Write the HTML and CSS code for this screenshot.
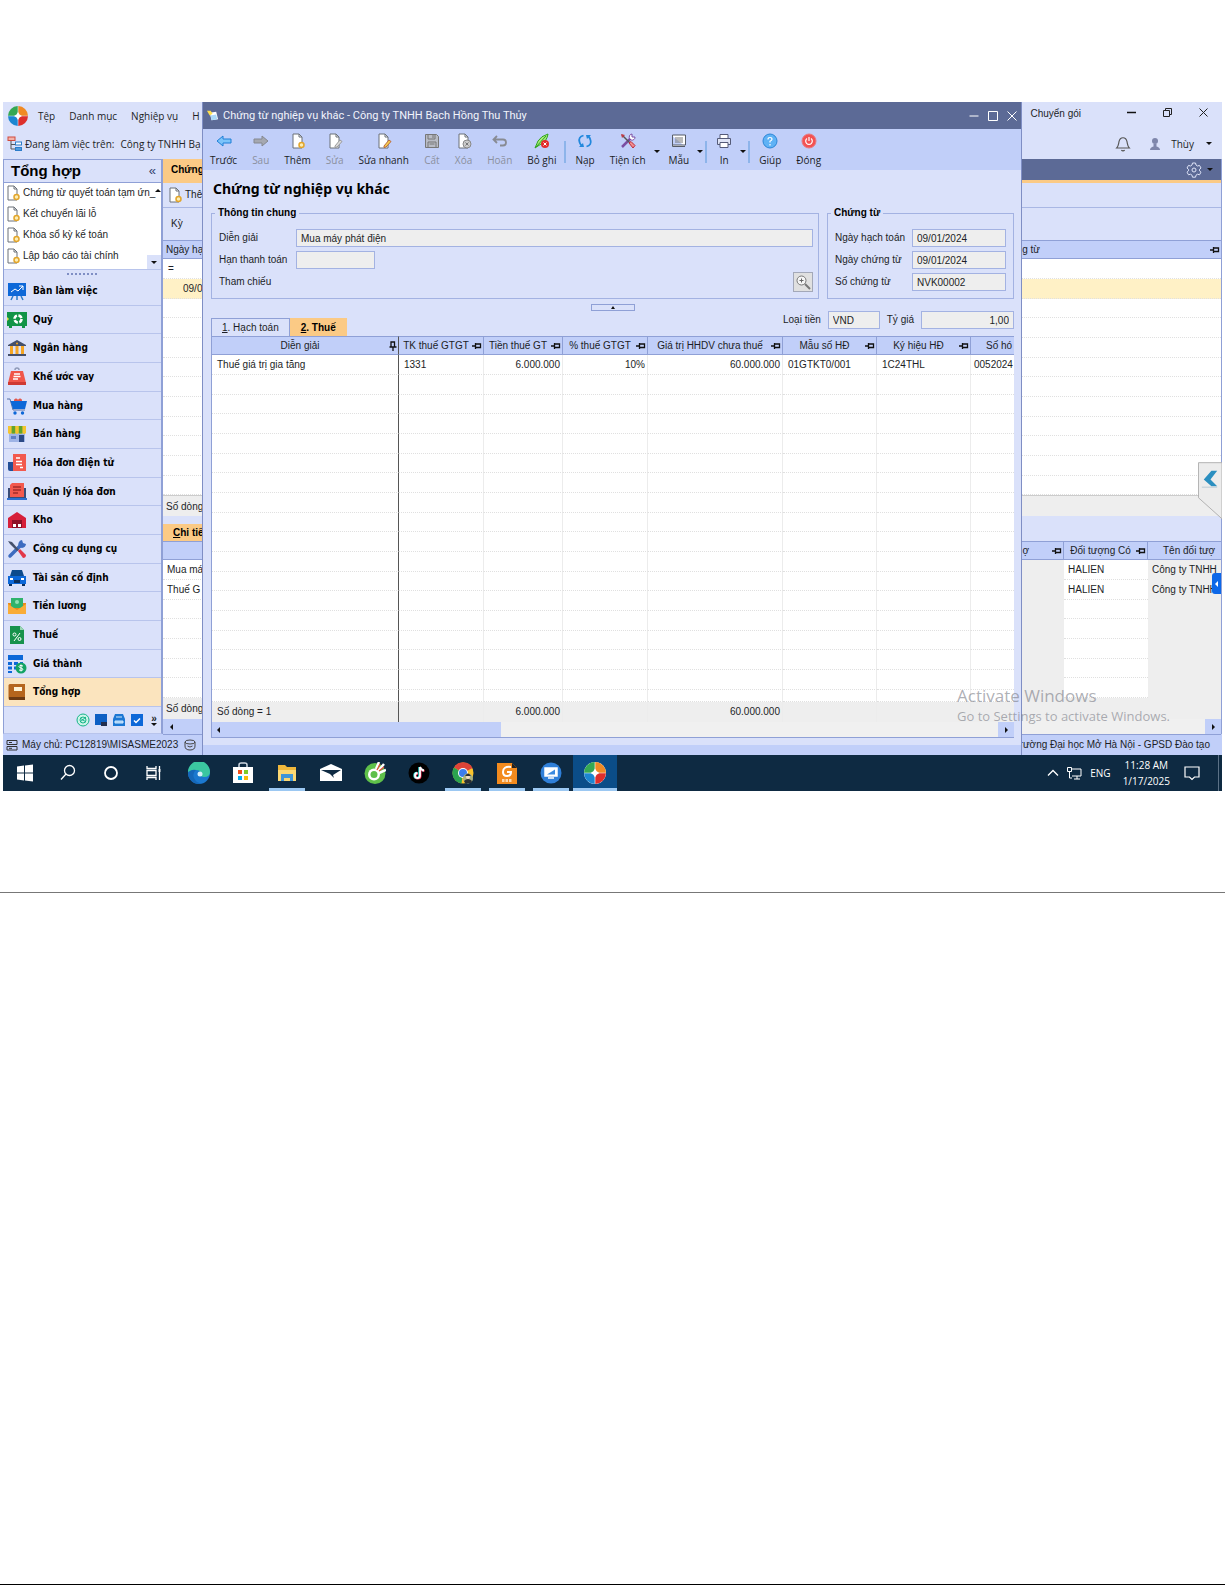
FILE: index.html
```html
<!DOCTYPE html>
<html lang="vi">
<head>
    <meta charset="UTF-8">
    <meta name="viewport" content="width=device-width, initial-scale=1.0">
    <title>Chứng từ nghiệp vụ khác</title>
    <link rel="stylesheet" href="styles.css">
</head>
<body>
    <!-- shared icons -->
    <svg class="defs" aria-hidden="true">
        <symbol id="pin" viewBox="0 0 10 8"><path d="M0 4h3M3.500 1v6M3.500 2h5v3.500h-5M3.500 5.500h5" fill="none" stroke="#111" stroke-width="1.300"/></symbol>
        <symbol id="pin-down" viewBox="0 0 8 10"><path d="M4 6v4M.5 6h7M2 6V1h3.500v5M5.500 1v5" fill="none" stroke="#111" stroke-width="1.300"/></symbol>
        <symbol id="doc" viewBox="0 0 16 16"><path d="M3 1h6l3 3v11H3z" fill="#fff" stroke="#6b7078"/><path d="M9 1v3h3" fill="none" stroke="#6b7078"/></symbol>
        <symbol id="newdoc" viewBox="0 0 16 16"><use href="#doc"/><circle cx="11.500" cy="12" r="2.500" fill="#fdeeb5" stroke="#e2a52b" stroke-width="1.500"/></symbol>
        <symbol id="misa" viewBox="0 0 20 20"><path d="M9.700 9.700V0A10 10 0 0 0 0 9.700z" fill="#35a853"/><path d="M10.300 9.700V0A10 10 0 0 1 20 9.700z" fill="#f08a24"/><path d="M9.700 10.300V20A10 10 0 0 1 0 10.300z" fill="#1c86d1"/><path d="M10.300 10.300V20A10 10 0 0 0 20 10.300z" fill="#dd2f2c"/><path d="M10 6l1.500 2.500L14 10l-2.500 1.500L10 14l-1.500-2.500L6 10l2.500-1.500z" fill="#fff"/></symbol>
    </svg>

    <section class="page">
        <div class="screen">
            <div class="app">
                <header class="menubar">
                    <svg class="logo"><use href="#misa"/></svg>
                    <nav class="menu">
                        <a href="#">Tệp</a>
                        <a href="#">Danh mục</a>
                        <a href="#">Nghiệp vụ</a>
                        <a href="#">H</a>
                    </nav>
                    <a class="upgrade" href="#">Chuyển gói</a>
                    <div class="window-buttons">
                        <button aria-label="Thu nhỏ"><svg viewBox="0 0 12 12"><path d="M1 5.500h9" stroke="#111" stroke-width="1.500"/></svg></button>
                        <button aria-label="Khôi phục"><svg viewBox="0 0 12 12"><path d="M1.500 3.500h6v6h-6zM3.500 3.500v-2h6v6h-2" fill="none" stroke="#222"/></svg></button>
                        <button aria-label="Đóng"><svg viewBox="0 0 12 12"><path d="M1.500 1.500l8 8M9.500 1.500l-8 8" stroke="#222"/></svg></button>
                    </div>
                </header>
                <div class="workbar">
                    <svg class="tree" viewBox="0 0 16 16"><path d="M4 5v8h5M4 8.500h5" fill="none" stroke="#555"/><rect x="1" y="1" width="7" height="3.500" fill="#f2b3ab" stroke="#cf4a3c"/><rect x="8.500" y="6" width="6" height="3" fill="#fff" stroke="#2b7cc9"/><rect x="8.500" y="11.500" width="6" height="3" fill="#4f9de0" stroke="#2b7cc9"/></svg>
                    <span>Đang làm việc trên:</span>
                    <span class="company">Công ty TNHH Bạ</span>
                    <svg class="bell" viewBox="0 0 14 14"><path d="M1.500 10.500c1.500-1.500 1.500-3 2-5.500C4 2.500 5.500 1.500 7 1.500S10 2.500 10.500 5c.5 2.500.5 4 2 5.500zM5.500 12.500q1.500 1 3 0" fill="none" stroke="#555"/></svg>
                    <svg class="user" viewBox="0 0 14 14"><circle cx="7" cy="4" r="3" fill="#7e86ab"/><path d="M2 13q0-2.500 3.500-3.500V7h3v2.500q3.500 1 3.500 3.500z" fill="#7e86ab"/></svg>
                    <span>Thùy</span>
                    <i class="caret user-caret"></i>
                </div>

                <div class="workspace">
                    <aside class="sidebar">
                        <div class="side-title"><h2>Tổng hợp</h2><span>«</span></div>
                        <div class="submenu">
                            <ul>
                                <li><svg><use href="#newdoc"/></svg>Chứng từ quyết toán tạm ứn_</li>
                                <li><svg><use href="#newdoc"/></svg>Kết chuyển lãi lỗ</li>
                                <li><svg><use href="#newdoc"/></svg>Khóa sổ kỳ kế toán</li>
                                <li><svg><use href="#newdoc"/></svg>Lập báo cáo tài chính</li>
                            </ul>
                            <div class="side-scroll"><button aria-label="Lên"><i class="tri-up"></i></button><button aria-label="Xuống"><i class="caret"></i></button></div>
                        </div>
                        <div class="splitter"></div>
                        <nav class="modules">
                            <a href="#"><svg viewBox="0 0 20 20"><path d="M6 15l-2 4M14 15l2 4M10 15v4" stroke="#2b7cc9" stroke-width="1.500"/><rect x="1" y="2" width="18" height="13" fill="#0d68d8"/><path d="M4 11l4-3 3 2 5-5M12 5h4v4" fill="none" stroke="#fff"/></svg>Bàn làm việc</a>
                            <a href="#"><svg viewBox="0 0 20 20"><path d="M0 2h20v14h-2v2h-3v-2H5v2H2v-2H0z" fill="#119447"/><circle cx="11" cy="9" r="3.500" fill="none" stroke="#fff" stroke-width="2.500" stroke-dasharray="4 1.500"/><path d="M0 7l2 2-2 2z" fill="#e6e04c"/></svg>Quỹ</a>
                            <a href="#"><svg viewBox="0 0 20 20"><path d="M1 7l9-5 9 5v1H1z" fill="#44506b"/><path d="M3 8h3v8H3zM8.500 8h3v8h-3zM14 8h3v8h-3z" fill="#f5a623"/><path d="M1 16h18v2H1z" fill="#44506b"/><circle cx="10" cy="5.500" r="1" fill="#f5a623"/></svg>Ngân hàng</a>
                            <a href="#"><svg viewBox="0 0 20 20"><path d="M8 3a2 2 0 0 1 4 0" fill="none" stroke="#8f9ab8" stroke-width="1.500"/><path d="M4 4h12l3 12v2H1v-2z" fill="#f0564a"/><path d="M1 15h18v3H1z" fill="#cf3a33"/><path d="M7 7h6M6.500 9.500h7M6 12h5" stroke="#fff" stroke-width="1.300"/></svg>Khế ước vay</a>
                            <a href="#"><svg viewBox="0 0 20 20"><path d="M7 5a2 2 0 0 1 4-1 2 2 0 0 1 4 1z" fill="#e2574c"/><path d="M0 3h3l3 11h12" fill="none" stroke="#5873a8"/><path d="M3.500 5H20l-2 8H6z" fill="#0d68d8"/><circle cx="8" cy="17" r="1.700" fill="#0d68d8"/><circle cx="15.500" cy="17" r="1.700" fill="#0d68d8"/></svg>Mua hàng</a>
                            <a href="#"><svg viewBox="0 0 20 20"><path d="M2 8h16v10H2z" fill="#9fb4e6"/><path d="M12 11h5v7h-5z" fill="#2c4a86"/><path d="M4 12h5v3H4z" fill="#5f7fc4"/><path d="M1 2h18v7q-2 2-3.600 0-2 2-3.600 0-2 2-3.600 0-2 2-3.600 0-2 2-3.600 0z" fill="#f4c430"/><path d="M4.600 2h3.600v7.500H4.600zM11.800 2h3.600v7.500h-3.600z" fill="#5fa32f"/></svg>Bán hàng</a>
                            <a href="#"><svg viewBox="0 0 20 20"><path d="M6 1h13v17H6z" fill="#f2594e"/><path d="M1 9h5v9H3q-2 0-2-2z" fill="#234f96"/><path d="M9 5h4M9 8.500h6M9 11.500h6M13 14.500h3" stroke="#fff" stroke-width="1.300"/></svg>Hóa đơn điện tử</a>
                            <a href="#"><svg viewBox="0 0 20 20"><path d="M1 6h18v10H1z" fill="#3a4c77"/><path d="M5 1h12v14H3V3z" fill="#f2594e"/><path d="M6 5h8M6 8h8M6 11h5" stroke="#a32d2b" stroke-width="1.300"/><path d="M0 16h20v2H0z" fill="#2d6fd0"/></svg>Quản lý hóa đơn</a>
                            <a href="#"><svg viewBox="0 0 20 20"><path d="M1 8l9-6 9 6v10H1z" fill="#d61f3a"/><path d="M5 10h10v8H5z" fill="#8e1027"/><path d="M6 14h3v3H6zM11 14h3v3h-3z" fill="#fff"/></svg>Kho</a>
                            <a href="#"><svg viewBox="0 0 20 20"><path d="M3 17L14 6" stroke="#3d6cc0" stroke-width="3.500" stroke-linecap="round"/><path d="M12 8a4.500 4.500 0 0 1 3-7l1 3 3 1a4.500 4.500 0 0 1-4 4z" fill="#3d6cc0"/><path d="M1 2l4 1 7 8-2 1-7-7z" fill="#44506b"/><path d="M11 12l2-2 6 6q0 3-3 3z" fill="#e2384a"/></svg>Công cụ dụng cụ</a>
                            <a href="#"><svg viewBox="0 0 20 20"><path d="M5 2h10l2 6H3z" fill="#0c4b8d"/><path d="M1 8h18v8H1z" fill="#0d68d8"/><path d="M2 16h3v2H2zM15 16h3v2h-3z" fill="#0b2f5c"/><path d="M3 10h3v2H3zM14 10h3v2h-3z" fill="#fff"/><path d="M7 12h6v3H7z" fill="#0b2f5c"/></svg>Tài sản cố định</a>
                            <a href="#"><svg viewBox="0 0 20 20"><path d="M1 7h18v11H1z" fill="#e88a1a"/><path d="M4 2h12v10H4z" fill="#2fb36c"/><circle cx="10" cy="6" r="2" fill="#8fe0b4"/><path d="M1 8l9 6 9-6v10H1z" fill="#f9ac37"/></svg>Tiền lương</a>
                            <a href="#"><svg viewBox="0 0 20 20"><path d="M3 1h10l4 4v14H3z" fill="#17924c"/><path d="M13 1v4h4z" fill="#9bd8b5"/><circle cx="7.500" cy="9.500" r="1.500" fill="none" stroke="#fff"/><circle cx="12.500" cy="14" r="1.500" fill="none" stroke="#fff"/><path d="M13 8l-6 8" stroke="#fff"/></svg>Thuế</a>
                            <a href="#"><svg viewBox="0 0 20 20"><path d="M1 1h15v5H1z" fill="#0d68d8"/><path d="M1 8h4v3H1zM7 8h4v3H7zM1 12.500h4v3H1zM1 17h4v2H1zM7 12.500h2v3H7zM13 8h3v2h-3z" fill="#0d68d8"/><circle cx="14" cy="14" r="5.500" fill="#13a364"/><path d="M16 12q-4-1.500-4 .5 0 1 2 1.500t2 1.500q0 1.500-4 .5M14 10.500v7" fill="none" stroke="#fff"/></svg>Giá thành</a>
                            <a class="active" href="#"><svg viewBox="0 0 20 20"><path d="M3 2h15v16H3q-1.500 0-1.500-2V3.500Q1.500 2 3 2z" fill="#b5651d"/><path d="M2 15h16v3H3q-1 0-1-1.500z" fill="#6d3a12"/><path d="M7 5h8v4H7z" fill="#fff3d6"/></svg>Tổng hợp</a>
                        </nav>
                        <div class="side-foot">
                            <svg viewBox="0 0 14 14"><circle cx="7" cy="7" r="6" fill="#cdf5e8" stroke="#16b48a"/><circle cx="7" cy="7" r="3" fill="none" stroke="#16b48a"/><path d="M4 9l6-5M4 5l6 4" stroke="#16b48a"/></svg>
                            <svg viewBox="0 0 14 14"><path d="M1 1h12v11H1z" fill="#0d5fc4"/><path d="M7 9h6v4H7z" fill="#222f4f"/></svg>
                            <svg viewBox="0 0 14 14"><path d="M3 1h8l2 5v7H1V6z" fill="#1c78d4"/><path d="M4 4h6M3 8h8v2H3z" fill="#9fd0fa" stroke="#cfe7fc"/></svg>
                            <svg viewBox="0 0 14 14"><path d="M1 1h12v12H1z" fill="#0d68d8"/><path d="M4 7.500l2 2 4-4" fill="none" stroke="#fff" stroke-width="1.500"/></svg>
                            <span class="more">»<i class="caret"></i></span>
                        </div>
                    </aside>

                    <main class="content">
                        <div class="tabstrip">
                            <button class="tab">Chứng</button>
                            <svg class="gear" viewBox="0 0 16 16"><path d="M6.500 1h3l.5 2 1.500 1 2-.6 1.500 2.600-1.500 1.400v1.400l1.500 1.400-1.500 2.600-2-.6-1.500 1-.5 2h-3L6 13.200l-1.500-1-2 .6L1 10.200l1.500-1.400V7.400L1 6l1.500-2.600 2 .6L6 3z" fill="none" stroke="#dfe4f8"/><circle cx="8" cy="8" r="2" fill="none" stroke="#dfe4f8"/></svg>
                            <i class="caret"></i>
                        </div>
                        <div class="list-tools"><svg><use href="#newdoc"/></svg>Thê</div>
                        <div class="filter">Kỳ</div>
                        <table class="grid list" data-rows="10">
                            <thead><tr><th class="first">Ngày hạ</th><th></th><th class="kind">g từ<svg class="pin"><use href="#pin"/></svg></th></tr></thead>
                            <tbody>
                                <tr><td>=</td><td></td><td></td></tr>
                                <tr class="selected"><td class="date">09/0</td><td></td><td></td></tr>
                            </tbody>
                        </table>
                        <div class="count">Số dòng</div>
                        <div class="detail-tabs"><button class="tab"><u>C</u>hi tiế</button></div>
                        <table class="grid detail" data-rows="5">
                            <colgroup><col class="w-desc"><col><col class="w-obj"><col class="w-name"></colgroup>
                            <thead><tr><th></th><th class="right">ợ<svg class="pin"><use href="#pin"/></svg></th><th>Đối tượng Có<svg class="pin"><use href="#pin"/></svg></th><th class="cut">Tên đối tượ</th></tr></thead>
                            <tbody>
                                <tr><td>Mua má</td><td></td><td>HALIEN</td><td>Công ty TNHH</td></tr>
                                <tr><td>Thuế G</td><td></td><td>HALIEN</td><td>Công ty TNHH</td></tr>
                            </tbody>
                        </table>
                        <div class="count detail-count">Số dòng</div>
                        <div class="hscroll"><button class="sb left" aria-label="Trái"><i class="tri-left"></i></button><span class="thumb"></span><button class="sb" aria-label="Phải"><i class="tri-right"></i></button></div>
                    </main>
                </div>

                <footer class="status">
                    <svg viewBox="0 0 12 12"><path d="M1 1.500h10v4H1zM1 7.500h10v3.500H1zM3 3.500h3M3 9.300h3" fill="none" stroke="#333"/></svg>
                    <span>Máy chủ: PC12819\MISASME2023</span>
                    <svg class="db" viewBox="0 0 12 12"><ellipse cx="6" cy="3" rx="5" ry="2" fill="none" stroke="#444"/><path d="M1 3v4q0 4 5 4t5-4V3M3.500 7q2.500 2 5 0" fill="none" stroke="#444"/></svg>
                    <span class="school">Trường Đại học Mở Hà Nội - GPSD Đào tạo</span>
                </footer>

                <button class="drawer" aria-label="Mở rộng"><svg viewBox="0 0 25 60"><path d="M.5.5H25V59L.5 37z" fill="#ececec" stroke="#b0b0b0"/><path d="M14 9h6l-7 9 7 7h-6L6 18z" fill="#2b8fc0"/><path d="M4 26h16" stroke="#b9c9d3"/></svg></button>
                <button class="flap" aria-label="Trợ lý"><i class="tri-left"></i></button>

                <div class="dialog" role="dialog" aria-labelledby="dialog-title">
                    <div class="dialog-bar">
                        <svg viewBox="0 0 14 14"><path d="M4 4l7-1 2 8-7 1z" fill="#fff"/><path d="M1 2l4 0 2 3-3 2z" fill="#ffe04d"/><path d="M5 7l6-1 1 5-6 1z" fill="#a9d8f8"/></svg>
                        <span id="dialog-title">Chứng từ nghiệp vụ khác - Công ty TNHH Bạch Hồng Thu Thủy</span>
                        <div class="dialog-buttons">
                            <button aria-label="Thu nhỏ"><svg viewBox="0 0 12 12"><path d="M1.500 6h9" stroke="#fff"/></svg></button>
                            <button aria-label="Phóng to"><svg viewBox="0 0 12 12"><path d="M1.500 1.500h9v9h-9z" fill="none" stroke="#fff"/></svg></button>
                            <button aria-label="Đóng"><svg viewBox="0 0 12 12"><path d="M1.500 1.500l9 9M10.500 1.500l-9 9" stroke="#fff"/></svg></button>
                        </div>
                    </div>
                    <div class="toolbar">
                        <button><svg viewBox="0 0 16 16"><path d="M1 8l6-5v3h8v4H7v3z" fill="#7cc4fa" stroke="#1f7fd6"/></svg>Trước</button>
                        <button disabled><svg viewBox="0 0 16 16"><path d="M15 8L9 3v3H1v4h8v3z" fill="#a5a8b0" stroke="#85888f"/></svg>Sau</button>
                        <button><svg><use href="#newdoc"/></svg>Thêm</button>
                        <button disabled><svg viewBox="0 0 16 16"><use href="#doc"/><path d="M8 13l5-6 2 1.500-5 5.500-2 .5z" fill="#ddd" stroke="#999"/></svg>Sửa</button>
                        <button><svg viewBox="0 0 16 16"><use href="#doc"/><path d="M8 13l5-6 2 1.500-5 5.500-2 .5z" fill="#f7cf4d" stroke="#b9663a"/></svg>Sửa nhanh</button>
                        <button disabled><svg viewBox="0 0 16 16"><path d="M1.500 1.500h11l2 2v11h-13z" fill="#b9bcc5" stroke="#777"/><path d="M4 2v4h7V2M4 14V9h8v5M5.500 11h5M9 2v3" fill="none" stroke="#777"/></svg>Cất</button>
                        <button disabled><svg viewBox="0 0 16 16"><use href="#doc"/><circle cx="11" cy="11" r="4" fill="#ccc" stroke="#888"/><path d="M9.500 9.500l3 3M12.500 9.500l-3 3" stroke="#777"/></svg>Xóa</button>
                        <button disabled><svg viewBox="0 0 16 16"><path d="M5 3L1.500 6.500 5 10M2 6.500h9q3 0 3 3t-3 3H8" fill="none" stroke="#888b93" stroke-width="1.800"/></svg>Hoãn</button>
                        <button><svg viewBox="0 0 16 16"><path d="M1 15L4 8q3-5 10-7-1 7-7 10z" fill="#a8ec7a" stroke="#2fa31f"/><path d="M2 14L12 3" stroke="#2fa31f"/><circle cx="11" cy="11" r="4" fill="#e32b2b"/><path d="M9.500 9.500l3 3M12.500 9.500l-3 3" stroke="#fff"/></svg>Bỏ ghi</button>
                        <span class="sep"></span>
                        <button><svg viewBox="0 0 16 16"><path d="M6.500 2.500Q1 4 2.500 9q.5 2 2 3.500M9.500 13.500q5.500-1.500 4-6.500-.5-2-2-3.500" fill="none" stroke="#2288dd" stroke-width="1.800"/><path d="M2 14l5 0-1-4zM14 2L9 2l1 4z" fill="#2288dd"/></svg>Nạp</button>
                        <button><svg viewBox="0 0 16 16"><path d="M2 14L11 5" stroke="#7b4ea3" stroke-width="2.500"/><path d="M10 6a3 3 0 0 1 2-5v3h3a3 3 0 0 1-4 3z" fill="#fff" stroke="#7b4ea3"/><path d="M2 2l8 8" stroke="#555" stroke-width="1.500"/><path d="M1 1l4 1-3 3z" fill="#c03b45"/><path d="M9 10l2-1.500 4 4-2 2.500z" fill="#f08e8e" stroke="#c02a3a"/></svg>Tiện ích</button>
                        <i class="caret"></i>
                        <button><svg viewBox="0 0 16 16"><path d="M1.500 3v10.500H14M1.500 2h13v10h-13z" fill="#fff" stroke="#555b66"/><path d="M4 5h8M4 7h8M4 9h8" stroke="#777"/></svg>Mẫu</button>
                        <i class="caret"></i>
                        <span class="sep"></span>
                        <button><svg viewBox="0 0 16 16"><path d="M4 5V1.500h8V5" fill="#fff" stroke="#555b78"/><path d="M1.500 5.500h13v6h-13z" fill="#dfe4f5" stroke="#555b78"/><path d="M4 9.500h8v5H4z" fill="#fff" stroke="#555b78"/></svg>In</button>
                        <i class="caret"></i>
                        <span class="sep"></span>
                        <button><svg viewBox="0 0 16 16"><circle cx="8" cy="8" r="7" fill="#5fb2f5" stroke="#2c86d6"/><path d="M6 6.500q0-2 2-2t2 1.700q0 1-2 2v1.300M8 11v1.500" fill="none" stroke="#fff" stroke-width="1.200"/></svg>Giúp</button>
                        <button><svg viewBox="0 0 16 16"><circle cx="8" cy="8" r="7" fill="#f35252" stroke="#e87a80"/><path d="M6 5.500a3.300 3.300 0 1 0 4 0M8 4v4" fill="none" stroke="#fff" stroke-width="1.200"/></svg>Đóng</button>
                    </div>

                    <form class="voucher">
                        <h1>Chứng từ nghiệp vụ khác</h1>
                        <div class="groups">
                            <fieldset class="general">
                                <legend>Thông tin chung</legend>
                                <div class="field"><label for="desc">Diễn giải</label><input id="desc" value="Mua máy phát điện" readonly></div>
                                <div class="field"><label for="due">Hạn thanh toán</label><input id="due" class="short" readonly></div>
                                <div class="field"><label for="ref">Tham chiếu</label><button type="button" id="ref" class="lookup" aria-label="Tham chiếu"><svg viewBox="0 0 16 16"><circle cx="6.500" cy="6.500" r="4.500" fill="#f5f5f5" stroke="#777"/><path d="M10 10l5 5" stroke="#777" stroke-width="2"/><path d="M4.500 6.500h4M6.500 4.500v4" stroke="#666"/></svg></button></div>
                            </fieldset>
                            <fieldset class="doc-info">
                                <legend>Chứng từ</legend>
                                <div class="field"><label for="posted">Ngày hạch toán</label><input id="posted" value="09/01/2024" readonly></div>
                                <div class="field"><label for="dated">Ngày chứng từ</label><input id="dated" value="09/01/2024" readonly></div>
                                <div class="field"><label for="number">Số chứng từ</label><input id="number" value="NVK00002" readonly></div>
                            </fieldset>
                        </div>
                        <button type="button" class="collapse" aria-label="Thu gọn"><i class="tri-up"></i></button>
                        <div class="grid-head">
                            <div class="tabs"><button type="button"><u>1</u>. Hạch toán</button><button type="button" class="on"><u>2</u>. Thuế</button></div>
                            <div class="currency">
                                <label for="cur">Loại tiền</label><input id="cur" class="cur" value="VND" readonly>
                                <label for="rate">Tỷ giá</label><input id="rate" class="rate" value="1,00" readonly>
                            </div>
                        </div>
                        <div class="grid-box">
                            <table class="grid tax" data-rows="17">
                                <colgroup><col><col class="c1"><col class="c2"><col class="c1"><col class="c3"><col class="c4"><col class="c4"><col class="c5"></colgroup>
                                <thead>
                                    <tr>
                                        <th>Diễn giải<svg class="pin down"><use href="#pin-down"/></svg></th>
                                        <th>TK thuế GTGT<svg class="pin"><use href="#pin"/></svg></th>
                                        <th>Tiền thuế GT<svg class="pin"><use href="#pin"/></svg></th>
                                        <th>% thuế GTGT<svg class="pin"><use href="#pin"/></svg></th>
                                        <th>Giá trị HHDV chưa thuế<svg class="pin"><use href="#pin"/></svg></th>
                                        <th>Mẫu số HĐ<svg class="pin"><use href="#pin"/></svg></th>
                                        <th>Ký hiệu HĐ<svg class="pin"><use href="#pin"/></svg></th>
                                        <th class="cut">Số hó</th>
                                    </tr>
                                </thead>
                                <tbody>
                                    <tr><td>Thuế giá trị gia tăng</td><td>1331</td><td class="num">6.000.000</td><td class="num">10%</td><td class="num">60.000.000</td><td>01GTKT0/001</td><td>1C24THL</td><td>0052024</td></tr>
                                </tbody>
                                <tfoot>
                                    <tr><td>Số dòng = 1</td><td></td><td class="num">6.000.000</td><td></td><td class="num">60.000.000</td><td></td><td></td><td></td></tr>
                                </tfoot>
                            </table>
                            <div class="hscroll"><span class="thumb"><i class="tri-left"></i></span><button type="button" class="sb" aria-label="Phải"><i class="tri-right"></i></button></div>
                        </div>
                    </form>
                </div>

                <div class="watermark"><strong>Activate Windows</strong><span>Go to Settings to activate Windows.</span></div>
            </div>

            <div class="taskbar">
                <div class="system">
                    <button aria-label="Start"><svg viewBox="0 0 20 20"><path d="M2 3.500l7-1V9.500H2zM10 2.500l8-1v8h-8zM2 10.500h7v7l-7-1zM10 10.500h8v8l-8-1z" fill="#fff"/></svg></button>
                    <button aria-label="Search"><svg viewBox="0 0 20 20"><circle cx="11.500" cy="7.500" r="5" fill="none" stroke="#fff" stroke-width="1.300"/><path d="M8 11l-5 5.500" stroke="#fff" stroke-width="1.300"/></svg></button>
                    <button aria-label="Cortana"><svg viewBox="0 0 20 20"><circle cx="10" cy="10" r="6" fill="none" stroke="#fff" stroke-width="1.800"/></svg></button>
                    <button aria-label="Task View"><svg viewBox="0 0 20 20"><path d="M3 3v2.500h9V3M3 17v-2.500h9V17M3 7.500h9v5H3zM15.500 3v3M15.500 9v8" fill="none" stroke="#fff" stroke-width="1.300"/><path d="M14.500 6h2v3h-2z" fill="#fff"/></svg></button>
                </div>
                <div class="programs">
                    <button aria-label="Edge"><svg viewBox="0 0 22 22"><circle cx="11" cy="11" r="11" fill="#1b78cf"/><path d="M0 10a11 11 0 0 1 22 0q0 5-6 5-4 0-3-3 0-4-5-4-5 0-8 2z" fill="#3bc7a0"/><path d="M0 11q3-4 8-3-4 3-2 8 2 5 8 5.500A11 11 0 0 1 0 11z" fill="#1567b8"/><circle cx="12" cy="12" r="2.500" fill="#d6effb"/></svg></button>
                    <button aria-label="Store"><svg viewBox="0 0 22 22"><path d="M7 6V3q0-2 2-2h4q2 0 2 2v3" fill="none" stroke="#cfd8e2" stroke-width="1.500"/><path d="M1 5h20v16H1z" fill="#fff"/><path d="M6 8h4v4H6z" fill="#f1511b"/><path d="M12 8h4v4h-4z" fill="#80cc28"/><path d="M6 14h4v4H6z" fill="#00adef"/><path d="M12 14h4v4h-4z" fill="#fbbc09"/></svg></button>
                    <button class="open" aria-label="Explorer"><svg viewBox="0 0 22 22"><path d="M2 3h7l2 2h9v14H2z" fill="#f0b83c"/><path d="M2 8h18v11H2z" fill="#fbd873"/><path d="M5 12h12v7h-3v-3H8v3H5z" fill="#3f95d8"/></svg></button>
                    <button aria-label="Mail"><svg viewBox="0 0 22 22"><path d="M0 7l11-5 11 5v12H0z" fill="#fff"/><path d="M1 8h20l-8 5 1 3-4-4z" fill="#0e2a42"/></svg></button>
                    <button aria-label="Cốc Cốc"><svg viewBox="0 0 22 22"><circle cx="11" cy="11.500" r="10.500" fill="#5fc04a"/><circle cx="10" cy="12.500" r="6" fill="#fff"/><circle cx="10" cy="12.500" r="3.500" fill="#5fc04a"/><path d="M12 7l3-7M14 9l6-7M15 11l7-3" stroke="#fff" stroke-width="2.500"/><path d="M13 8l3-6M15 9l5-4" stroke="#e64b3c" stroke-width="1.200"/></svg></button>
                    <button aria-label="TikTok"><svg viewBox="0 0 22 22"><circle cx="11" cy="11" r="10.500" fill="#000"/><path d="M11.500 5v8.500a2.500 2.500 0 1 1-2.500-2.500M11.500 5q1 3 4 3.500" fill="none" stroke="#2ee6e0" stroke-width="2.400"/><path d="M12.500 5.500v8.500a2.500 2.500 0 1 1-2.500-2.500M12.500 5.500q1 3 4 3.500" fill="none" stroke="#fe2c55" stroke-width="2"/><path d="M12 5v8.500a2.500 2.500 0 1 1-2.500-2.500M12 5q1 3 4 3.500" fill="none" stroke="#fff" stroke-width="1.800"/></svg></button>
                    <button class="open" aria-label="Chrome"><svg viewBox="0 0 22 22"><circle cx="11" cy="11" r="10.500" fill="#f9c32c"/><path d="M11 11L2 5.500A10.500 10.500 0 0 1 20.500 6z" fill="#df4438"/><path d="M11 11L2 5.500A10.500 10.500 0 0 0 9.500 21.500z" fill="#2aa350"/><circle cx="11" cy="11" r="5" fill="#fff"/><circle cx="11" cy="11" r="4" fill="#3b7ded"/><circle cx="16" cy="16.500" r="5" fill="#a9b07c"/><circle cx="16" cy="15" r="2" fill="#f3ddc3"/><path d="M13 14q3-5 6 0z" fill="#2b2f33"/><path d="M12 19q4-4 8 0l-1 2h-6z" fill="#2b2f33"/></svg></button>
                    <button class="open" aria-label="Foxit PDF"><svg viewBox="0 0 22 22"><path d="M1 1h15l5 5v16H1z" fill="#f38b1e"/><path d="M16 1v5h5z" fill="#222"/><path d="M15 5q-8-1-8 5 0 4 4 4 4 0 4-4h-4" fill="none" stroke="#fff" stroke-width="2"/><path d="M6 18.500h10" stroke="#ffd9ae" stroke-width="3" stroke-dasharray="2.500 1"/></svg></button>
                    <button class="open" aria-label="UltraViewer"><svg viewBox="0 0 22 22"><circle cx="11" cy="11" r="10.500" fill="#2f7fd8"/><path d="M5 6h12v8H5zM8 16h6" fill="#fff" stroke="#fff" stroke-width="1.500"/><path d="M15 7.500v5H7z" fill="#3b8ae0"/></svg></button>
                    <button class="open current" aria-label="MISA"><svg viewBox="0 0 20 20"><circle cx="10" cy="10" r="10" fill="#fff"/><use href="#misa"/></svg></button>
                </div>
                <div class="tray">
                    <svg viewBox="0 0 14 14"><path d="M2 9.500l5-5 5 5" fill="none" stroke="#fff" stroke-width="1.300"/></svg>
                    <svg class="net" viewBox="0 0 16 14"><path d="M5 3h10v7H6M8 13h6M11 10v3M1.500 1.500h4v4h-4zM3.500 5.500V12H6" fill="none" stroke="#fff"/></svg>
                    <span>ENG</span>
                    <time>11:28 AM<br>1/17/2025</time>
                    <svg class="note" viewBox="0 0 16 16"><path d="M1 2h14v10h-4.500L8 14.500 5.500 12H1z" fill="none" stroke="#fff" stroke-width="1.200"/></svg>
                    <span class="show-desktop"></span>
                </div>
            </div>
        </div>
    </section>
    <section class="page blank"></section>

    <script>
        // pad every grid with empty rows
        document.querySelectorAll('table[data-rows]').forEach(table => {
            const cells = table.tHead.rows[0].cells.length;
            const body = table.tBodies[0];
            for (let i = 0; i < Number(table.dataset.rows); i++) {
                const row = body.insertRow();
                for (let c = 0; c < cells; c++) {
                    row.insertCell();
                }
            }
        });
    </script>
</body>
</html>
```

FILE: styles.css
```css
* {
    margin: 0;
    padding: 0;
    box-sizing: border-box;
}

body {
    display: flex;
    flex-direction: column;
    min-height: 100vh;
    background: #fff;
    color: #1c1e26;
    font: 10px/14px "Liberation Sans", Arial, sans-serif;
}

button, input {
    font: inherit;
    color: inherit;
}

button {
    border: none;
    background: none;
}

a {
    color: inherit;
    text-decoration: none;
}

svg {
    display: block;
    flex: none;
    width: 16px;
    height: 16px;
}

.defs {
    position: absolute;
    width: 0;
    height: 0;
}

.page {
    padding: 102px 3px 101px;
    border-bottom: 1px solid #777;
}

.page.blank {
    flex: 1;
    padding: 0;
    border-bottom-color: #000;
}

.screen {
    overflow: hidden;
}

.app {
    position: relative;
    background: #dae1fa;
}

/* small arrows */
.caret, .tri-up, .tri-left, .tri-right {
    flex: none;
    width: 0;
    height: 0;
    border: 3px solid transparent;
}

.caret {
    border-top-color: #111;
    border-bottom: none;
}

.tri-up {
    border-bottom-color: #111;
    border-top: none;
}

.tri-left {
    border-right-color: #111;
    border-left: none;
}

.tri-right {
    border-left-color: #111;
    border-right: none;
}

/* main window top */
.menubar, .workbar {
    display: flex;
    align-items: center;
    font-family: "Open Sans", "Noto Sans", sans-serif;
    white-space: nowrap;
}

.menubar {
    height: 28px;
    padding: 0 12px 0 5px;
}

.logo {
    width: 20px;
    height: 20px;
}

.menu {
    display: flex;
    gap: 14px;
    margin-left: 10px;
}

.upgrade {
    margin-left: auto;
    padding-bottom: 4px;
    font-family: "Liberation Sans", Arial, sans-serif;
}

.window-buttons {
    display: flex;
    gap: 24px;
    margin-left: 45px;
    padding-bottom: 6px;
}

.window-buttons svg {
    width: 12px;
    height: 12px;
}

.workbar {
    height: 29px;
    padding: 0 10px 2px 4px;
    gap: 2px;
}

.company {
    margin-left: 4px;
}

.bell {
    margin-left: auto;
}

.user {
    width: 14px;
    height: 14px;
    margin: 0 7px 0 15px;
}

.user-caret {
    margin-left: 10px;
}

.workspace {
    display: flex;
    height: 575px;
}

/* sidebar */
.sidebar {
    display: flex;
    flex-direction: column;
    flex: none;
    width: 159px;
    border: 1px solid #8fa0d6;
    border-bottom-color: #b8c4ec;
}

.side-title {
    display: flex;
    align-items: center;
    justify-content: space-between;
    height: 23px;
    padding: 0 5px 0 7px;
    border-bottom: 1px solid #8fa0d6;
    font-size: 13px;
    color: #34406b;
}

.side-title h2 {
    font-size: 15px;
    color: #000;
}

.submenu {
    display: flex;
    height: 86px;
    background: #fff;
}

.submenu ul {
    display: flex;
    flex: 1;
    flex-direction: column;
    min-width: 0;
    padding-bottom: 3px;
    list-style: none;
    white-space: nowrap;
}

.submenu li {
    display: flex;
    flex: 1;
    align-items: center;
    gap: 2px;
    padding-left: 1px;
}

.side-scroll {
    display: flex;
    flex-direction: column;
    justify-content: space-between;
}

.side-scroll button {
    display: grid;
    place-items: center end;
    width: 14px;
    height: 14px;
}

.side-scroll button:last-child {
    place-items: center;
    background: #dae1fa;
}

.splitter {
    height: 8px;
    background: repeating-linear-gradient(90deg, #7f8ec4 0 2px, transparent 2px 4px) center / 32px 2px no-repeat #dae1fa;
    border-top: 1px solid #b8c4ec;
}

.modules {
    display: flex;
    flex: 1;
    flex-direction: column;
    font: bold 10px/14px "DejaVu Sans Condensed", "DejaVu Sans", sans-serif;
    color: #000;
}

.modules a {
    display: flex;
    flex: 1;
    align-items: center;
    gap: 6px;
    padding-left: 3px;
    border-bottom: 1px solid #b8c4ec;
}

.modules svg {
    width: 20px;
    height: 20px;
}

.modules .active {
    background: #fbe4be;
}

.side-foot {
    display: flex;
    align-items: center;
    justify-content: flex-end;
    gap: 4px;
    height: 26px;
    padding-right: 4px;
}

.side-foot svg {
    width: 14px;
    height: 14px;
}

.more {
    display: flex;
    flex-direction: column;
    align-items: center;
    margin-left: 3px;
    font-weight: bold;
    line-height: 9px;
}

/* list behind the dialog */
.content {
    flex: 1;
    min-width: 0;
    border: solid #8fa0d6;
    border-width: 0 1px;
}

.tabstrip {
    display: flex;
    align-items: center;
    gap: 5px;
    height: 24px;
    padding-right: 8px;
    border-bottom: 3px solid #fbca85;
    background: #5c6a96;
}

.tab {
    align-self: stretch;
    padding: 0 8px;
    background: #fbca85;
    color: #000;
    font-weight: bold;
}

.gear {
    margin-left: auto;
}

.list-tools, .filter {
    display: flex;
    align-items: center;
    gap: 2px;
    height: 25px;
    padding-left: 4px;
    border-bottom: 1px solid #a9b7e4;
}

.filter {
    height: 32px;
    padding-left: 8px;
    border-bottom: none;
}

.grid {
    width: 100%;
    border-collapse: separate;
    border-spacing: 0;
    table-layout: fixed;
    white-space: nowrap;
}

.grid th {
    position: relative;
    height: 19px;
    padding-right: 10px;
    border: solid #8fa0d6;
    border-width: 1px 1px 1px 0;
    background: #c1cff9;
    font-weight: normal;
}

.grid th:last-child {
    border-right: none;
}

.grid th.cut {
    padding: 0 0 0 15px;
    text-align: left;
}

.grid td {
    height: 20px;
    padding: 0 5px;
    border-bottom: 1px dotted #e0e0e0;
    background: #fff;
}

.grid tbody tr:nth-child(3n) td {
    height: 19px;
}

.pin {
    position: absolute;
    top: 5px;
    right: 1px;
    width: 10px;
    height: 8px;
}

.pin.down {
    top: 4px;
    width: 8px;
    height: 10px;
}

.list .first {
    width: 120px;
    padding: 0 3px;
    text-align: left;
}

.list .kind {
    width: 410px;
    padding-right: 181px;
    text-align: right;
}

.list .date {
    padding-left: 20px;
}

.grid .selected td {
    background: #fff1c6;
}

.count {
    height: 21px;
    padding: 4px 3px;
    border-top: 1px solid #ccc;
    background: #eee;
}

.detail-tabs {
    display: flex;
    height: 25px;
    padding-top: 8px;
}

.detail-tabs .tab {
    padding: 0 10px;
}

.w-desc {
    width: 200px;
}

.w-obj {
    width: 84px;
}

.w-name {
    width: 73px;
}

.detail .right {
    padding-right: 34px;
    text-align: right;
}

.detail td {
    padding: 0 4px;
}

.detail td:nth-child(even) {
    border-bottom-color: #eee;
    background: #eee;
}

.detail-count {
    border-top: none;
}

.hscroll {
    display: flex;
    justify-content: space-between;
    height: 16px;
    border: solid #8fa0d6;
    border-width: 0 0 1px;
    background: #f0f0f0;
}

.hscroll .thumb {
    display: flex;
    align-items: center;
    padding-left: 5px;
    background: #c1cff9;
}

.sb {
    display: grid;
    place-items: center;
    width: 16px;
    background: #c1cff9;
}

.sb.left + .thumb {
    flex: 0 1 120px;
    margin-right: auto;
}

.status {
    display: flex;
    align-items: center;
    gap: 4px;
    height: 21px;
    padding: 0 12px 0 3px;
    background: #c1cff9;
    white-space: nowrap;
}

.status svg {
    width: 12px;
    height: 12px;
}

.status .db {
    margin-left: 2px;
}

.school {
    margin-left: auto;
}

.drawer {
    position: absolute;
    top: 359px;
    right: 0;
}

.drawer svg {
    width: 24px;
    height: 60px;
}

.flap {
    position: absolute;
    top: 471px;
    right: 1px;
    display: grid;
    place-items: center;
    width: 9px;
    height: 21px;
    border-radius: 3px 0 0 3px;
    background: #0d68e8;
}

.flap .tri-left {
    border-right-color: #fff;
}

/* voucher window */
.dialog {
    position: absolute;
    top: 0;
    right: 200px;
    bottom: 0;
    left: 199px;
    display: flex;
    flex-direction: column;
    border: solid #7f8ec4;
    border-width: 0 1px;
    background: #dae1fa;
}

.dialog-bar {
    display: flex;
    align-items: center;
    gap: 4px;
    height: 28px;
    padding: 0 3px;
    background: #5c6a96;
    color: #f2f4fc;
    font: 11px/14px Roboto, "Noto Sans", sans-serif;
}

.dialog-bar svg {
    width: 13px;
    height: 13px;
}

.dialog-buttons {
    display: flex;
    gap: 7px;
    margin-left: auto;
}

.dialog-buttons svg {
    width: 12px;
    height: 12px;
}

.toolbar {
    display: flex;
    align-items: center;
    height: 42px;
    background: #c1cff9;
    font-family: "Open Sans", "Noto Sans", sans-serif;
}

.toolbar button {
    display: flex;
    flex-direction: column;
    align-items: center;
    gap: 4px;
    padding: 0 8px 0 7px;
    white-space: nowrap;
}

.toolbar button:disabled {
    color: #8b8f9e;
}

.toolbar .sep {
    width: 2px;
    height: 22px;
    margin: 4px 2px 0 0;
    background: #8db4ea;
}

.toolbar .caret {
    margin: 4px 2px 0 0;
}

.voucher {
    display: flex;
    flex: 1;
    flex-direction: column;
    padding: 9px 7px 7px 8px;
    border-bottom: 10px solid #c1cff9;
}

.voucher h1 {
    padding-left: 2px;
    color: #000;
    font: bold 14px/20px "Noto Sans", "Open Sans", sans-serif;
}

.groups {
    display: flex;
    gap: 8px;
    margin-top: 7px;
}

fieldset {
    display: flex;
    flex-direction: column;
    gap: 4px;
    min-width: 0;
    height: 93px;
    padding: 9px 7px 0;
    border: 1px solid #a3b2e2;
}

legend {
    padding: 0 3px;
    margin-left: -4px;
    color: #000;
    font-weight: bold;
}

.general {
    flex: 1;
    padding-right: 5px;
}

.doc-info {
    flex: none;
    width: 187px;
}

.field {
    display: flex;
    align-items: center;
    height: 18px;
}

.field label {
    flex: none;
    width: 77px;
}

input {
    min-width: 0;
    height: 18px;
    padding: 0 4px;
    border: 1px solid #a3b2e2;
    background: #eee;
    outline: none;
}

.field input {
    flex: 1;
}

.field .short {
    flex: none;
    width: 79px;
}

.lookup {
    display: grid;
    place-items: center;
    width: 20px;
    height: 20px;
    margin-left: auto;
    border: 1px solid #a3a8b8;
    background: #e0e0e0;
}

.collapse {
    display: grid;
    place-items: center;
    align-self: center;
    width: 44px;
    height: 7px;
    margin-top: 5px;
    border: 1px solid #8fa0d6;
}

.collapse .tri-up {
    border-width: 0 2px 3px;
}

.grid-head {
    display: flex;
    align-items: flex-end;
    justify-content: space-between;
    height: 25px;
}

.tabs {
    display: flex;
}

.tabs button {
    height: 18px;
    padding: 0 10px;
    border: 1px solid #8fa0d6;
    border-bottom: none;
}

.tabs .on {
    border-color: #fbca85;
    background: #fbca85;
    color: #000;
    font-weight: bold;
}

.currency {
    display: flex;
    align-items: center;
    gap: 7px;
    padding-bottom: 7px;
}

.cur {
    width: 52px;
}

.rate {
    width: 93px;
    text-align: right;
}

.grid-box {
    display: flex;
    flex: 1;
    flex-direction: column;
    border-left: 1px solid #8fa0d6;
}

.c1 { width: 85px; }
.c2 { width: 79px; }
.c3 { width: 135px; }
.c4 { width: 94px; }
.c5 { width: 43px; }

.tax td {
    border-right: 1px solid #ececec;
}

.tax th:first-child, .tax td:first-child {
    border-right: 1px solid #555;
}

.tax .num {
    padding-right: 2px;
    text-align: right;
}

.tax tbody tr:last-child td {
    height: 12px;
}

.tax tfoot td {
    height: 20px;
    border-bottom: none;
    background: #eee;
}

.tax td:last-child {
    padding-left: 3px;
    border-right: none;
}

.grid-box .hscroll {
    flex: none;
}

.grid-box .thumb {
    width: 36%;
}

.watermark {
    position: absolute;
    right: 52px;
    bottom: 29px;
    display: flex;
    flex-direction: column;
    color: rgba(120, 122, 132, 0.6);
    font: 13px/20px "Open Sans", "Noto Sans", sans-serif;
}

.watermark strong {
    font-size: 17px;
    font-weight: normal;
}

/* windows taskbar */
.taskbar {
    display: flex;
    height: 36px;
    background: #0e2a42;
    color: #fff;
    font-family: "Open Sans", "Noto Sans", sans-serif;
}

.system, .programs {
    display: flex;
}

.system {
    margin-right: 2px;
}

.taskbar button {
    display: grid;
    place-items: center;
    width: 43px;
}

.system svg {
    width: 20px;
    height: 20px;
}

.programs button {
    width: 44px;
}

.programs svg {
    width: 22px;
    height: 22px;
}

.programs .open {
    background: linear-gradient(#9cc8f2, #9cc8f2) bottom / 36px 3px no-repeat;
}

.programs .current {
    background: linear-gradient(#9cc8f2, #9cc8f2) bottom / 100% 3px no-repeat #0b4d88;
}

.tray {
    display: flex;
    align-items: center;
    margin-left: auto;
    text-align: center;
}

.tray svg {
    width: 14px;
    height: 14px;
}

.tray .net {
    width: 16px;
    margin: 0 8px 0 6px;
}

.tray time {
    margin: 0 14px 0 12px;
    line-height: 16px;
}

.tray .note {
    width: 16px;
    height: 16px;
}

.show-desktop {
    align-self: stretch;
    width: 4px;
    margin-left: 18px;
    border-left: 1px solid #5b7186;
}
```
